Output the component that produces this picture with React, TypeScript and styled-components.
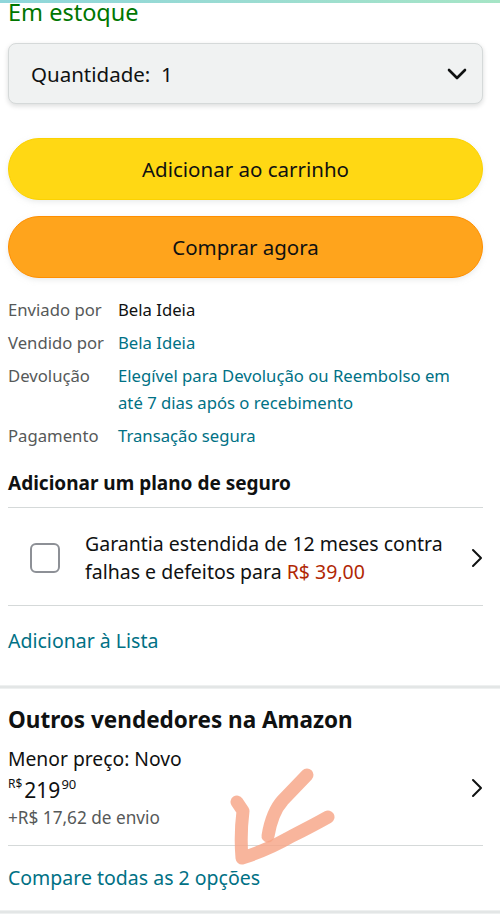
import React from "react";
import styled, { createGlobalStyle } from "styled-components";

const Global = createGlobalStyle`
  html, body { margin: 0; padding: 0; background: #ffffff; }
  body { font-family: "Noto Sans", "Open Sans", sans-serif; color: #0f1111; }
  * { box-sizing: border-box; }
`;

const Page = styled.div`
  position: relative;
  width: 500px;
  height: 922px;
  overflow: hidden;
  background: #fff;
`;

const TopBar = styled.div`
  height: 3px;
  background: linear-gradient(90deg, #8fd6da 0%, #9bdcd2 50%, #a6e5c6 100%);
`;

const Section = styled.div`
  padding: 0 17px 0 8px;
`;

const Stock = styled.div`
  margin-top: -2px;
  font-size: 23.5px;
  line-height: 22px;
  color: #007600;
`;

const Select = styled.div`
  margin-top: 20px;
  height: 61px;
  display: flex;
  align-items: center;
  justify-content: space-between;
  padding: 0 15px 0 22px;
  background: #f0f2f2;
  border: 1px solid #d5d9d9;
  border-radius: 8px;
  box-shadow: 0 2px 5px rgba(15, 17, 17, 0.15);
  font-size: 20.5px;
`;

const Button = styled.div<{ $bg: string; $border: string }>`
  height: 62px;
  display: flex;
  align-items: center;
  justify-content: center;
  border-radius: 31px;
  background: ${(p) => p.$bg};
  border: 1px solid ${(p) => p.$border};
  box-shadow: 0 2px 5px rgba(213, 217, 217, 0.5);
  font-size: 20.5px;
  color: #0f1111;
`;

const Buttons = styled.div`
  margin-top: 34px;
  display: flex;
  flex-direction: column;
  gap: 16px;
`;

const InfoTable = styled.div`
  margin-top: 18px;
  display: grid;
  grid-template-columns: 110px 1fr;
  row-gap: 6px;
  font-size: 16.7px;
  line-height: 27px;
`;

const Label = styled.div`
  color: #565959;
`;

const Value = styled.div<{ $link?: boolean }>`
  padding-right: 12px;
  color: ${(p) => (p.$link ? "#007185" : "#0f1111")};
`;

const Heading = styled.div<{ $size: number; $top: number }>`
  margin-top: ${(p) => p.$top}px;
  font-size: ${(p) => p.$size}px;
  font-weight: 700;
  line-height: 28px;
  color: #0f1111;
`;

const Divider = styled.div<{ $top?: number }>`
  margin-top: ${(p) => p.$top ?? 0}px;
  height: 1px;
  background: #d5d9d9;
`;

const InsuranceRow = styled.div`
  display: flex;
  align-items: center;
  padding: 22px 0 19px 22px;
`;

const CheckBox = styled.div`
  width: 30px;
  height: 30px;
  flex: none;
  border: 2px solid #8d9096;
  border-radius: 6px;
  background: #fff;
  margin-right: 25px;
`;

const InsuranceText = styled.div`
  flex: 1;
  margin-right: 12px;
  font-size: 19.5px;
  line-height: 28px;
`;

const Price = styled.span`
  color: #b12704;
`;

const LinkLine = styled.div<{ $top: number }>`
  margin-top: ${(p) => p.$top}px;
  font-size: 19.5px;
  line-height: 26px;
  color: #007185;
`;

const ThickRule = styled.div<{ $top: number }>`
  margin-top: ${(p) => p.$top}px;
  height: 4px;
  background: #e3e6e6;
  border-top: 1px solid #eef0f0;
  border-bottom: 1px solid #eef0f0;
`;

const OfferRow = styled.div`
  display: flex;
  align-items: center;
  justify-content: space-between;
  margin-top: 11px;
`;

const OfferText = styled.div`
  display: flex;
  flex-direction: column;
`;

const Line = styled.div<{ $size: number; $color?: string; $lh: number }>`
  font-size: ${(p) => p.$size}px;
  line-height: ${(p) => p.$lh}px;
  color: ${(p) => p.$color ?? "#0f1111"};
`;

const BigPrice = styled.div`
  display: flex;
  align-items: flex-start;
  height: 28px;
  margin-top: 5px;
`;

const Sup = styled.span<{ $size: number }>`
  font-size: ${(p) => p.$size}px;
  line-height: 12px;
`;

const Whole = styled.span`
  font-size: 21px;
  line-height: 24px;
  margin: 0 1px 0 2px;
`;

const Overlay = styled.svg`
  position: absolute;
  left: 0;
  top: 0;
  pointer-events: none;
`;

const ChevronDown = () => (
  <svg width="20" height="12" viewBox="0 0 20 12">
    <path d="M2 2 L10 10 L18 2" fill="none" stroke="#0f1111" strokeWidth="2.6" strokeLinecap="round" strokeLinejoin="round" />
  </svg>
);

const ChevronRight = () => (
  <svg width="12" height="20" viewBox="0 0 12 20">
    <path d="M2 2 L10 10 L2 18" fill="none" stroke="#0f1111" strokeWidth="2" strokeLinecap="round" strokeLinejoin="round" />
  </svg>
);

export default function App() {
  return (
    <Page>
      <Global />
      <TopBar />
      <Section>
        <Stock>Em estoque</Stock>
        <Select>
          <span>Quantidade:&nbsp; 1</span>
          <ChevronDown />
        </Select>
        <Buttons>
          <Button $bg="#ffd814" $border="#fcd200">Adicionar ao carrinho</Button>
          <Button $bg="#ffa41c" $border="#ff8f00">Comprar agora</Button>
        </Buttons>
        <InfoTable>
          <Label>Enviado por</Label>
          <Value>Bela Ideia</Value>
          <Label>Vendido por</Label>
          <Value $link>Bela Ideia</Value>
          <Label>Devolução</Label>
          <Value $link>Elegível para Devolução ou Reembolso em até 7 dias após o recebimento</Value>
          <Label>Pagamento</Label>
          <Value $link>Transação segura</Value>
        </InfoTable>
        <Heading $size={19} $top={20}>Adicionar um plano de seguro</Heading>
        <Divider $top={10} />
        <InsuranceRow>
          <CheckBox />
          <InsuranceText>
            Garantia estendida de 12 meses contra falhas e defeitos para <Price>R$ 39,00</Price>
          </InsuranceText>
          <ChevronRight />
        </InsuranceRow>
        <Divider />
        <LinkLine $top={22}>Adicionar à Lista</LinkLine>
      </Section>
      <ThickRule $top={31} />
      <Section>
        <Heading $size={22.5} $top={17}>Outros vendedores na Amazon</Heading>
        <OfferRow>
          <OfferText>
            <Line $size={19.3} $lh={28}>Menor preço: Novo</Line>
            <BigPrice>
              <Sup $size={12}>R$</Sup>
              <Whole>219</Whole>
              <Sup $size={13}>90</Sup>
            </BigPrice>
            <Line $size={17.2} $lh={24} $color="#565959">+R$ 17,62 de envio</Line>
          </OfferText>
          <ChevronRight />
        </OfferRow>
        <Divider $top={15} />
        <LinkLine $top={19}>Compare todas as 2 opções</LinkLine>
      </Section>
      <ThickRule $top={19} />
      <Overlay width="500" height="922" viewBox="0 0 500 922">
        <g fill="none" stroke="#f6a383" strokeOpacity="0.8" strokeWidth="13" strokeLinecap="round" strokeLinejoin="round">
          <path d="M307 775 L283 800 Q272 812 268 836" />
          <path d="M237 802 L243 811 Q240 835 242 858 Q268 850 292 836 Q312 826 328 817" />
        </g>
      </Overlay>
    </Page>
  );
}
